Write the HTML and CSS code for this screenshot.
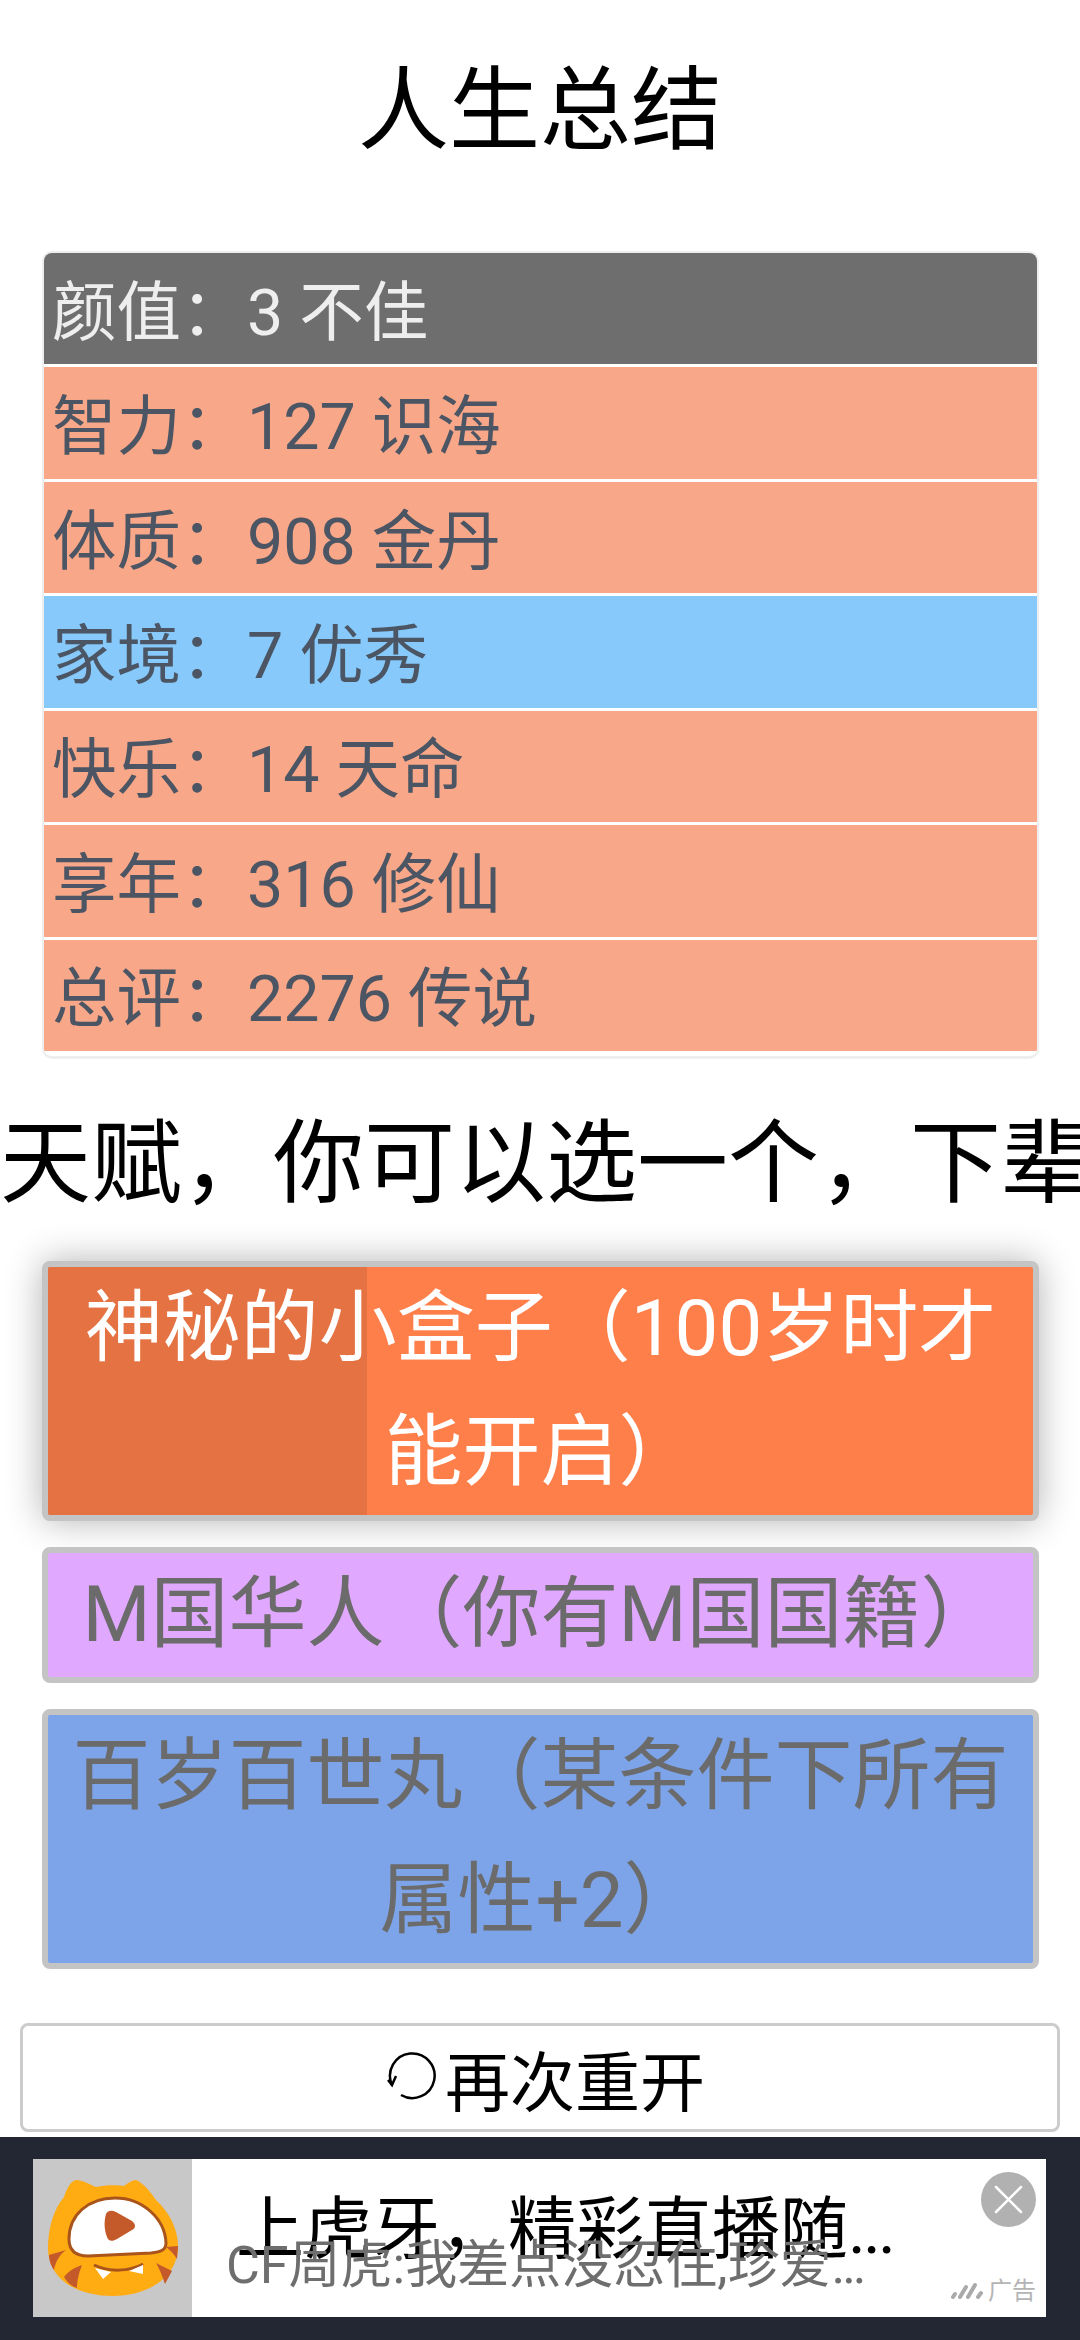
FILE: index.html
```html
<!DOCTYPE html>
<html lang="zh">
<head>
<meta charset="utf-8">
<title>人生总结</title>
<link rel="stylesheet" href="styles.css">
</head>
<body>
<main class="page">
  <div class="content">
    <h1 class="title">人生总结</h1>
    <ul class="stats">
      <li class="stat grade-gray"><span class="stat-label">颜值：</span><span>3 不佳</span></li>
      <li class="stat grade-orange"><span class="stat-label">智力：</span><span>127 识海</span></li>
      <li class="stat grade-orange"><span class="stat-label">体质：</span><span>908 金丹</span></li>
      <li class="stat grade-blue"><span class="stat-label">家境：</span><span>7 优秀</span></li>
      <li class="stat grade-orange"><span class="stat-label">快乐：</span><span>14 天命</span></li>
      <li class="stat grade-orange"><span class="stat-label">享年：</span><span>316 修仙</span></li>
      <li class="stat grade-orange"><span class="stat-label">总评：</span><span>2276 传说</span></li>
    </ul>
    <h2 class="subtitle">天赋，你可以选一个，下辈子还能抽到</h2>
    <div class="talents">
      <button class="talent talent-orange"><span class="talent-shade"></span><span class="talent-text">神秘的小盒子（100岁时才能开启）</span></button>
      <button class="talent talent-purple"><span class="talent-text">M国华人（你有M国国籍）</span></button>
      <button class="talent talent-blue"><span class="talent-text">百岁百世丸（某条件下所有属性+2）</span></button>
    </div>
    <button class="restart"><svg class="restart-icon" viewBox="0 0 56 52" aria-hidden="true"><path d="M14 43A22.3 22.3 0 1 0 5 33"/><path d="M1 28L5 33L9 24"/></svg><span>再次重开</span></button>
  </div>
  <aside class="ad">
    <div class="ad-card">
      <div class="ad-thumb">
        <svg class="ad-logo" viewBox="0 0 159 158" aria-hidden="true">
          <path d="M31 38C34 29 38 21 44 21C52 22 58 26 63 28C72 26 84 26 91 27C95 24 99 21 103 21C110 24 117 32 123 41C137 54 146 72 145 90C143 120 113 137 80 137C46 137 16 122 15 90C15 68 21 50 31 38Z" fill="#ffab12"/>
          <path d="M36 80C36 56 55 39 82 39C110 39 132 60 133 84C133 91 128 93 118 94C98 95 72 96 55 97C43 97 36 92 36 80Z" fill="#fff" stroke="#a8541a" stroke-width="3"/>
          <path d="M73 55C75 51 79 51 83 53L99 62C103 65 103 69 99 71L84 80C79 83 75 82 74 78C71 70 71 62 73 55Z" fill="#c4592a"/>
          <path d="M61 106C76 113 96 113 110 105" fill="none" stroke="#a8541a" stroke-width="3"/>
          <path d="M62 109L78 113L70 120Z M110 106L96 112L110 115Z" fill="#fff"/>
          <path d="M16 96L33 91C26 96 22 104 21 111C18 107 16 101 16 96Z M31 118C35 113 40 109 49 106C45 116 44 124 44 129C38 127 34 123 31 118Z M123 104L139 112L132 125C129 116 126 109 123 104Z M133 88L145 87L144 100C141 95 137 91 133 88Z" fill="#c4592a"/>
        </svg>
      </div>
      <div class="ad-body">
        <p class="ad-headline">上虎牙，精彩直播随<span class="ad-dots">...</span></p>
        <p class="ad-caption">CF周虎:我差点没忍住,珍爱<span class="ad-dots">...</span></p>
      </div>
      <span class="ad-close"><svg viewBox="0 0 55 55" aria-hidden="true"><path d="M15 15L40 40M40 15L15 40"/></svg></span>
      <span class="ad-mark"><svg viewBox="0 0 34 22" aria-hidden="true"><path d="M3 17l2-3M10 17l6-10M18 17l7-12M28 17l3-4"/></svg><span>广告</span></span>
    </div>
  </aside>
</main>
</body>
</html>
```
FILE: styles.css
```css
* { box-sizing: border-box; }
html, body { margin: 0; padding: 0; background: #fff; }
body { font-family: Roboto, "Noto Sans CJK SC", sans-serif; width: 1080px; height: 2340px; overflow: hidden; }
.page { width: 1080px; height: 2340px; display: flex; flex-direction: column; overflow: hidden; }
.content { flex: 1; display: flex; flex-direction: column; padding-top: 48px; min-height: 0; }

.title { margin: 0; height: 126px; font-size: 91px; line-height: 126px; font-weight: 400; text-align: center; color: #000; }

.stats { list-style: none; margin: 77px 41px 0 42px; padding: 0 0 5px; border: 2px solid #eee; border-bottom-width: 3px; border-radius: 10px; background: #fff; display: flex; flex-direction: column; gap: 3px; height: 808px; overflow: hidden; }
.stat { flex: 1; display: flex; align-items: center; padding: 0 0 4px 8px; font-size: 64.5px; color: #4b5563; }
.stat-label { width: 195px; flex: none; }
.grade-gray { background: #6e6e6e; color: #eee; }
.grade-orange { background: #f8a788; }
.grade-blue { background: #86c9fa; }

.subtitle { margin: 42px 0 0; height: 126px; font-size: 91px; line-height: 126px; font-weight: 400; color: #000; white-space: nowrap; }

.talents { margin: 34px 41px 0 42px; display: flex; flex-direction: column; gap: 26px; }
.talent { position: relative; width: 100%; padding: 0 20px; border: 6px solid #c4c4c4; border-radius: 8px; font-family: inherit; font-size: 78px; line-height: 124px; text-align: center; color: #6b6b6b; overflow: hidden; display: block; }
.talent-text { position: relative; display: block; }
.talent-orange { background: #ff7f4a; color: #fff; box-shadow: 0 0 36px rgba(0,0,0,.3); overflow: visible; }
.talent-purple { background: #e0a9ff; }
.talent-blue { background: #7da4e8; }
.talent-shade { position: absolute; left: 0; top: 0; bottom: 0; width: 319px; background: rgba(0,0,0,.1); }

.restart { margin: 54px 20px 0 20px; padding-left: 18px; height: 109px; flex: none; display: flex; align-items: center; justify-content: center; gap: 2px; background: #fff; border: 3px solid #ccc; border-radius: 8px; font-family: inherit; font-size: 65px; color: #000; }
.restart-icon { width: 56px; height: 52px; fill: none; stroke: #000; stroke-width: 2.5; }

.ad { flex: none; height: 203px; background: #222733; padding: 22px 34px 23px 33px; }
.ad-card { position: relative; height: 158px; background: #fff; display: flex; }
.ad-thumb { width: 159px; height: 158px; background: #c8c8c8; flex: none; }
.ad-logo { display: block; width: 159px; height: 158px; }
.ad-body { flex: 1; padding-left: 44px; min-width: 0; }
.ad-headline { margin: 26px 0 0; font-size: 68px; line-height: 90px; color: #000; white-space: nowrap; }
.ad-caption { position: absolute; left: 193px; top: 72px; margin: 0; font-size: 52px; line-height: 70px; color: #6e6e6e; white-space: nowrap; }
.ad-dots { letter-spacing: -3px; }
.ad-close { position: absolute; right: 10px; top: 13px; width: 55px; height: 55px; border-radius: 50%; background: #b1b1b1; }
.ad-close svg { display: block; width: 55px; height: 55px; fill: none; stroke: #fff; stroke-width: 2.5; stroke-linecap: round; }
.ad-mark { position: absolute; right: 10px; bottom: 11px; display: flex; align-items: center; gap: 4px; font-size: 24px; line-height: 30px; color: #b4b4b4; }
.ad-mark svg { width: 34px; height: 22px; fill: none; stroke: #aaa; stroke-width: 4; stroke-linecap: round; }
```
